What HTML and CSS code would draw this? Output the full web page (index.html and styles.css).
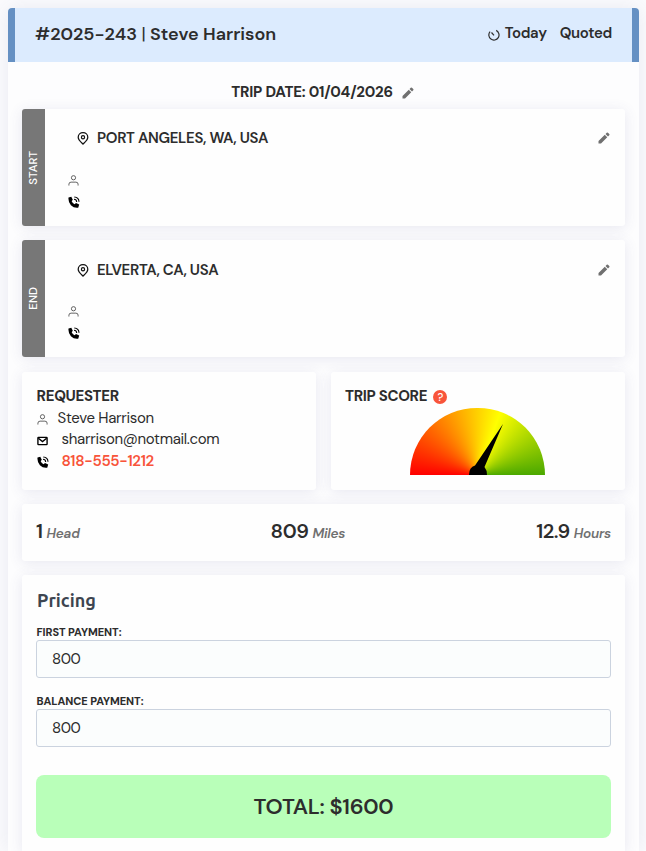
FILE: index.html
```html
<!DOCTYPE html>
<html lang="en">
<head>
<meta charset="utf-8">
<title>Trip quote</title>
<link rel="stylesheet" href="styles.css">
</head>
<body>
<svg class="sprite" width="0" height="0">
  <symbol id="pencil" viewBox="0 0 24 24"><path d="M1 18v5h5L18.500 10.500l-5-5zM22.500 6.500a1.700 1.700 0 0 0 0-2.400L19.900 1.500a1.700 1.700 0 0 0-2.400 0L15 4l5 5z"/></symbol>
  <symbol id="pin" viewBox="0 0 12 13"><path d="M6 12C4.500 10.500 1.200 8 1.200 5.200a4.800 4.500 0 0 1 9.600 0C10.800 8 7.500 10.500 6 12z" fill="none" stroke="currentColor" stroke-width="1.250"/><circle cx="6" cy="5.300" r="1.600" fill="none" stroke="currentColor" stroke-width="1.200"/></symbol>
  <symbol id="person" viewBox="0 0 12 12"><circle cx="6" cy="3" r="2.300" fill="none" stroke="currentColor"/><path d="M1 11.500V10q0-2.200 2.400-2.200h5.200Q11 7.800 11 10v1.500" fill="none" stroke="currentColor"/></symbol>
  <symbol id="phone" viewBox="0 0 12 12"><path d="M.5 1.500 3.300.8 4.800 3.800 3.700 5.200Q4.500 7.300 6.600 8.200L8 6.900l3.200 1.500-1 3.300Q6 12.300 2.900 9.200 0 6 .5 1.500z"/><path d="M6 3.300Q8.500 3.400 8.700 6M6.300 1Q10.800 1.300 11 5.700" fill="none" stroke="currentColor" stroke-width="1.100"/></symbol>
  <symbol id="mail" viewBox="0 0 12 10"><rect x="1" y="1" width="10" height="8" rx=".6" fill="none" stroke="currentColor" stroke-width="1.500"/><path d="M1.500 2 6 5.700 10.500 2" fill="none" stroke="currentColor" stroke-width="1.500"/></symbol>
</svg>
<main class="quote">
  <header class="head">
    <h1 class="title">#2025-243 <span class="bar">|</span> Steve Harrison</h1>
    <div class="status">
      <svg class="clock" viewBox="0 0 12 12"><path d="M2.100 2.600A5.100 5.100 0 1 0 8.200 1.400M6 6.300 3.500 3.500" fill="none" stroke="currentColor" stroke-width="1.200"/></svg>
      <span class="today">Today</span><span class="quoted">Quoted</span>
    </div>
  </header>
  <div class="body">
    <div class="date"><span class="date-text">TRIP DATE: 01/04/2026</span><svg class="pencil"><use href="#pencil"/></svg></div>

    <section class="card stop">
      <div class="tab"><span>START</span></div>
      <div class="stop-info">
        <div class="place"><svg class="pin"><use href="#pin"/></svg><span>PORT ANGELES, WA, USA</span><svg class="pencil"><use href="#pencil"/></svg></div>
        <svg class="person"><use href="#person"/></svg>
        <svg class="phone"><use href="#phone"/></svg>
      </div>
    </section>

    <section class="card stop stop-end">
      <div class="tab"><span>END</span></div>
      <div class="stop-info">
        <div class="place"><svg class="pin"><use href="#pin"/></svg><span>ELVERTA, CA, USA</span><svg class="pencil"><use href="#pencil"/></svg></div>
        <svg class="person"><use href="#person"/></svg>
        <svg class="phone"><use href="#phone"/></svg>
      </div>
    </section>

    <div class="pair">
      <section class="card panel">
        <h2 class="label">REQUESTER</h2>
        <div class="line"><svg class="person"><use href="#person"/></svg><span>Steve Harrison</span></div>
        <div class="line wide"><svg class="mail"><use href="#mail"/></svg><span>sharrison@notmail.com</span></div>
        <div class="line wide"><svg class="phone"><use href="#phone"/></svg><a class="tel">818-555-1212</a></div>
      </section>
      <section class="card panel">
        <h2 class="label"><span>TRIP SCORE</span><span class="help">?</span></h2>
        <div class="gauge"><svg viewBox="0 0 135 67"><path d="M59 67Q59 59 65 57.500L93 16 74.500 59Q77 62 77 67z"/></svg></div>
      </section>
    </div>

    <section class="card stats">
      <div><b>1</b><i>Head</i></div>
      <div><b>809</b><i>Miles</i></div>
      <div><b>12.9</b><i>Hours</i></div>
    </section>

    <section class="card pricing">
      <h2 class="heading">Pricing</h2>
      <label class="field-label" for="first">FIRST PAYMENT:</label>
      <input class="field" id="first" value="800">
      <label class="field-label balance" for="balance">BALANCE PAYMENT:</label>
      <input class="field" id="balance" value="800">
      <div class="total"><span>TOTAL: $1600</span></div>
    </section>
  </div>
</main>
</body>
</html>
```

FILE: styles.css
```css
* { box-sizing: border-box; }
html { overflow: hidden; }
body {
  margin: 0;
  padding: 8px 7px 0 8px;
  height: 851px;
  overflow: hidden;
  background: #fbfbfd;
  color: #2d2d2d;
  font: 15px/20px "DM Sans", Inter, "Liberation Sans", sans-serif;
  letter-spacing: -.32px;
}
svg { display: block; flex: none; fill: currentColor; }
.sprite { position: absolute; }
h1, h2 { margin: 0; }
.quote {
  height: 843px;
  border-radius: 4px 4px 0 0;
  background: #fdfdfe;
  box-shadow: 0 0 20px rgba(70, 75, 140, .1);
}
.head {
  height: 54px;
  padding: 0 20px;
  display: flex;
  align-items: center;
  justify-content: space-between;
  background: #dcebfe;
  border: solid #6590c3;
  border-width: 0 7px;
  border-radius: 4px 4px 0 0;
}
.title { font-size: 18px; font-weight: 600; line-height: 24px; letter-spacing: 0; white-space: nowrap; padding-bottom: 2px; }
.bar { font-weight: 400; }
.status { display: flex; align-items: center; font-weight: 600; line-height: 20px; padding-bottom: 4px; letter-spacing: -.32px; }
.clock { width: 12px; height: 12px; margin: 3px 5px 0 0; }
.today { margin-right: 13px; }

.body { padding: 19px 14px 0 14px; }
.date { height: 28px; padding: 1px 2px 0 0; display: flex; justify-content: center; font-weight: 700; letter-spacing: -.2px; }
.date .pencil { margin: 5px 0 0 9px; }
.pencil { width: 12px; height: 12px; color: #707070; }
.card {
  border-radius: 3px;
  background: #fefefe;
  box-shadow: 0 2px 14px rgba(70, 75, 140, .12);
}
.stop { display: flex; height: 117px; margin-bottom: 14px; }
.stop-end { margin-bottom: 15px; }
.tab {
  width: 23px;
  display: flex;
  align-items: center;
  justify-content: center;
  border-radius: 3px 0 0 3px;
  background: #777;
  color: #fff;
  font-size: 11.500px;
  font-weight: 500;
  letter-spacing: 0;
}
.tab span { writing-mode: vertical-rl; transform: rotate(180deg); line-height: 21px; }
.stop-info { flex: 1; padding: 19px 15px 0 23px; }
.place { display: flex; align-items: center; height: 20px; margin-bottom: 27px; padding-left: 9px; font-weight: 600; }
.place .pencil { margin-left: auto; }
.pin { width: 12px; height: 13px; margin-right: 8px; color: #111; }
.person { width: 11px; height: 11px; color: #555; }
.phone { width: 12px; height: 12px; color: #000; }
.stop-info .person { margin-bottom: 10px; }
.stop-end .stop-info { padding-top: 20px; }
.stop-end .place { margin-bottom: 26px; }

.pair { display: grid; grid-template-columns: 294px 294px; gap: 15px; margin-bottom: 14px; }
.panel { height: 118px; padding: 13px 14px 0; }
.label { display: flex; align-items: center; height: 22px; font-size: 15px; font-weight: 700; line-height: 20px; }
.line { display: flex; align-items: center; height: 21.500px; line-height: 21px; }
.label + .line { margin-top: .6px; }
.panel:first-child > * { padding-left: .6px; }
.line svg { margin: 2px 10px 0 0; }
.wide svg { margin-right: 14px; }
.wide .phone { margin-right: 13px; }
.mail { width: 11px; height: 10px; color: #000; }
.tel { color: #f8543a; font-weight: 600; }
.help {
  width: 14px;
  height: 14px;
  margin: 2px 0 0 6px;
  border-radius: 50%;
  background: #f8543a;
  color: #fff;
  font-size: 11px;
  font-weight: 500;
  line-height: 14px;
  text-align: center;
}
.gauge {
  width: 135px;
  height: 67px;
  margin: 1px 0 0 65px;
  border-radius: 68px 68px 0 0;
  background: conic-gradient(from 270deg at 50% 100%, #f00, #ff0 110deg, #4ba800 180deg);
  color: #000;
}
.gauge svg { width: 135px; height: 67px; }

.stats { display: flex; justify-content: space-between; height: 57px; margin-bottom: 14px; padding: 14px 14px 0; line-height: 26px; }
.stats b { margin-right: 4px; font-size: 20px; font-weight: 600; letter-spacing: -.4px; }
.stats i { color: #707070; font-size: 13.500px; font-weight: 600; letter-spacing: -.25px; }

.pricing { height: 276px; padding: 14px 14px 0; border-radius: 3px 3px 0 0; }
.heading { height: 23px; padding-left: 1px; color: #3d4550; font: 700 18px/22px Ubuntu, "Noto Sans", sans-serif; letter-spacing: 0; }
.field-label { display: block; width: max-content; height: 16px; margin-top: 12px; padding-left: .5px; font-size: 11px; font-weight: 800; line-height: 17px; letter-spacing: -.05px; }
.field {
  display: block;
  width: 100%;
  height: 38px;
  padding: 0 15px;
  border: 1px solid #cbd3df;
  border-radius: 3px;
  background: #fbfdfd;
  color: #2d2d2d;
  font: inherit;
  letter-spacing: -.4px;
}
.balance { margin-top: 15px; }
.total {
  display: flex;
  align-items: center;
  justify-content: center;
  height: 63px;
  margin-top: 28px;
  border-radius: 8px;
  background: #b9ffb9;
  font-size: 22px;
  font-weight: 600;
}
```
